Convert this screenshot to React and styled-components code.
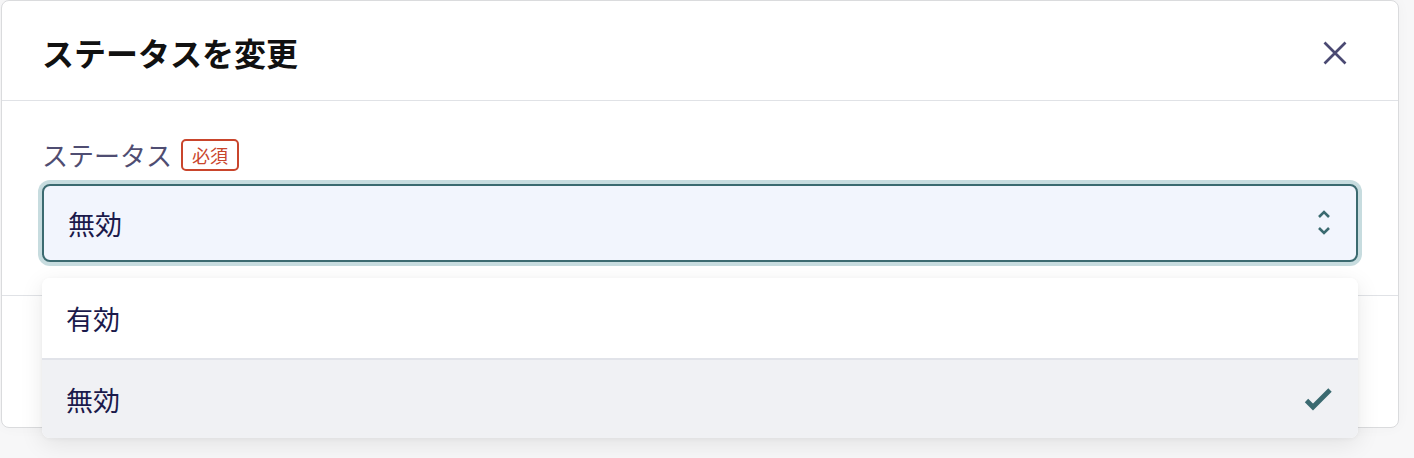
import React, { useState } from "react";
import styled, { createGlobalStyle } from "styled-components";

const options = [
    { value: "active", label: "有効" },
    { value: "inactive", label: "無効" },
];

const GlobalStyle = createGlobalStyle`
    body {
        margin: 0;
        background: #f7f7f8;
        font-family: "Noto Sans CJK JP", "Noto Sans", sans-serif;
    }
`;

const CloseIcon = () => (
    <svg width="24" height="24" viewBox="0 0 24 24" fill="none">
        <path d="M1.5 1.5 L22.5 22.5 M22.5 1.5 L1.5 22.5" stroke="#4a4972" strokeWidth="2.7" />
    </svg>
);

const UpDownIcon = () => (
    <svg width="14" height="26" viewBox="0 0 14 26" fill="none">
        <path d="M2 7 L7 2 L12 7 M2 18 L7 23 L12 18" stroke="#3b6a70" strokeWidth="2.6" />
    </svg>
);

const CheckIcon = () => (
    <svg width="28" height="24" viewBox="0 0 28 24" fill="none">
        <path d="M2.5 13.5 L9 20 L26 3" stroke="#3b6a70" strokeWidth="4.8" strokeLinejoin="miter" />
    </svg>
);

const StatusModal = () => {
    const [status, setStatus] = useState("inactive");
    const current = options.find((o) => o.value === status);

    return (
        <Page>
            <GlobalStyle />
            <Modal>
                <Header>
                    <Title>ステータスを変更</Title>
                    <CloseButton aria-label="閉じる">
                        <CloseIcon />
                    </CloseButton>
                </Header>
                <Body>
                    <Field>
                        <LabelRow>
                            <Label>ステータス</Label>
                            <Badge>必須</Badge>
                        </LabelRow>
                        <Select>
                            <span>{current.label}</span>
                            <UpDownIcon />
                        </Select>
                        <Listbox>
                            {options.map((o, i) => (
                                <Option
                                    key={o.value}
                                    $selected={o.value === status}
                                    $first={i === 0}
                                    onClick={() => setStatus(o.value)}
                                >
                                    <span>{o.label}</span>
                                    {o.value === status && <CheckIcon />}
                                </Option>
                            ))}
                        </Listbox>
                    </Field>
                </Body>
                <Footer />
            </Modal>
        </Page>
    );
};

const Page = styled.div`
    min-height: 458px;
    padding-left: 1px;
`;

const Modal = styled.div`
    width: 1398px;
    height: 428px;
    box-sizing: border-box;
    border: 1px solid #dadbdd;
    border-radius: 8px;
    background: #fff;
    display: flex;
    flex-direction: column;
    box-shadow: 0 0 14px rgba(0, 0, 0, 0.03);
`;

const Header = styled.div`
    height: 100px;
    box-sizing: border-box;
    border-bottom: 1px solid #e0e2e6;
    padding: 4px 51px 0 40px;
    display: flex;
    align-items: center;
    justify-content: space-between;
`;

const Title = styled.h2`
    margin: 0;
    font-size: 32px;
    font-weight: 700;
    color: #111;
    line-height: 1.2;
`;

const CloseButton = styled.button`
    background: none;
    border: none;
    padding: 0;
    width: 24px;
    height: 24px;
    display: flex;
    cursor: pointer;
`;

const Body = styled.div`
    padding: 38px 40px 33px;
`;

const Field = styled.div`
    position: relative;
`;

const LabelRow = styled.div`
    display: flex;
    align-items: center;
    gap: 9px;
    height: 32px;
`;

const Label = styled.span`
    font-size: 26px;
    line-height: 32px;
    color: #4f4d72;
`;

const Badge = styled.span`
    height: 32px;
    box-sizing: border-box;
    padding: 0 9px;
    border: 2px solid #c9452c;
    border-radius: 5px;
    font-size: 18px;
    line-height: 28px;
    color: #c9452c;
`;

const Select = styled.div`
    margin-top: 13px;
    height: 78px;
    box-sizing: border-box;
    border: 2px solid #3b6a70;
    border-radius: 8px;
    box-shadow: 0 0 0 4px #c7dcdf;
    background: #f2f5fd;
    display: flex;
    align-items: center;
    justify-content: space-between;
    padding: 0 25px 0 24px;
    font-size: 27px;
    color: #1b1a4b;
`;

const Listbox = styled.div`
    position: absolute;
    top: 139px;
    left: 0;
    right: 0;
    background: #fff;
    border-radius: 8px;
    overflow: hidden;
    box-shadow: 0 6px 24px rgba(0, 0, 0, 0.09), 0 1px 4px rgba(0, 0, 0, 0.04);
    z-index: 2;
`;

const Option = styled.div`
    height: 80px;
    box-sizing: border-box;
    border-top: ${({ $first }) => ($first ? "none" : "2px solid #e1e3e9")};
    padding: 0 26px 0 24px;
    display: flex;
    align-items: center;
    justify-content: space-between;
    font-size: 27px;
    color: #1b1a4b;
    background: ${({ $selected }) => ($selected ? "#f0f1f4" : "#fff")};
    cursor: pointer;
`;

const Footer = styled.div`
    flex: 1;
    border-top: 1px solid #e0e2e6;
`;

export default StatusModal;
